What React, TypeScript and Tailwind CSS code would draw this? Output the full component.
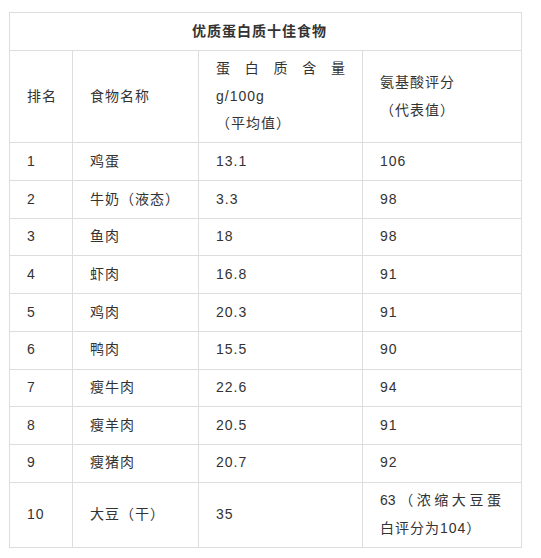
import React from 'react'

type Row = { rank: string; name: string; protein: string; score: React.ReactNode }

const rows: Row[] = [
  { rank: '1', name: '鸡蛋', protein: '13.1', score: '106' },
  { rank: '2', name: '牛奶（液态）', protein: '3.3', score: '98' },
  { rank: '3', name: '鱼肉', protein: '18', score: '98' },
  { rank: '4', name: '虾肉', protein: '16.8', score: '91' },
  { rank: '5', name: '鸡肉', protein: '20.3', score: '91' },
  { rank: '6', name: '鸭肉', protein: '15.5', score: '90' },
  { rank: '7', name: '瘦牛肉', protein: '22.6', score: '94' },
  { rank: '8', name: '瘦羊肉', protein: '20.5', score: '91' },
  { rank: '9', name: '瘦猪肉', protein: '20.7', score: '92' },
  {
    rank: '10',
    name: '大豆（干）',
    protein: '35',
    score: (
      <>
        <div className="flex justify-between pr-[3px]">
          {['63', '（', '浓', '缩', '大', '豆', '蛋'].map((c, i) => (
            <span key={i} className="tracking-normal">
              {c}
            </span>
          ))}
        </div>
        <div>白评分为104）</div>
      </>
    )
  }
]

const cell = 'border border-[#dddddd] pl-[17px] pr-[17px] py-[4.6px] align-middle whitespace-nowrap'

export default function App() {
  return (
    <div
      className="pt-[12px] pl-[9px] text-[14px] leading-[27.5px] tracking-[1px] text-[#333333]"
      style={{ fontFamily: '"Liberation Sans", "Noto Sans CJK SC", sans-serif' }}
    >
      <table className="table-fixed border-collapse w-[512px]">
        <colgroup>
          <col className="w-[63px]" />
          <col className="w-[126px]" />
          <col className="w-[164px]" />
          <col className="w-[159px]" />
        </colgroup>
        <thead>
          <tr>
            <th colSpan={4} className={`${cell} !pr-[29px] text-center font-bold`}>
              优质蛋白质十佳食物
            </th>
          </tr>
          <tr className="text-left font-normal">
            <td className={cell}>排名</td>
            <td className={cell}>食物名称</td>
            <td className={cell}>
              <div className="flex justify-between">
                {['蛋', '白', '质', '含', '量'].map((c) => (
                  <span key={c} className="tracking-normal">
                    {c}
                  </span>
                ))}
              </div>
              <div>g/100g</div>
              <div>（平均值）</div>
            </td>
            <td className={cell}>
              <div>氨基酸评分</div>
              <div>（代表值）</div>
            </td>
          </tr>
        </thead>
        <tbody>
          {rows.map((r) => (
            <tr key={r.rank}>
              <td className={cell}>{r.rank}</td>
              <td className={cell}>{r.name}</td>
              <td className={cell}>{r.protein}</td>
              <td className={cell}>{r.score}</td>
            </tr>
          ))}
        </tbody>
      </table>
    </div>
  )
}
